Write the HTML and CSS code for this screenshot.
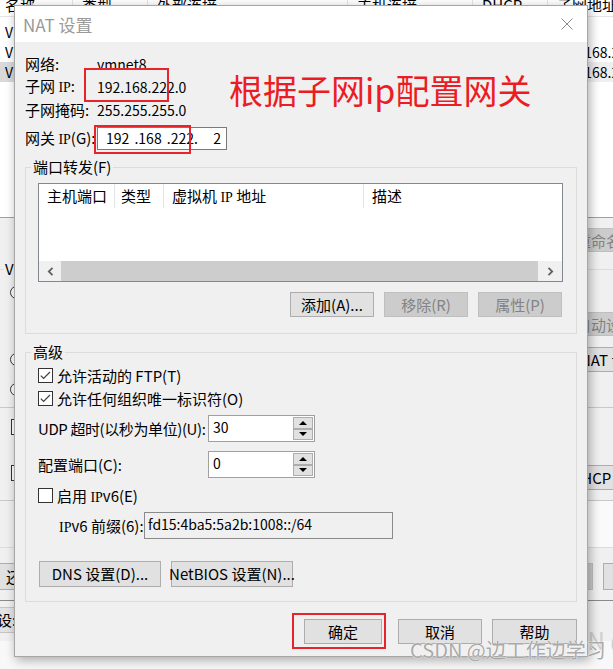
FILE: index.html
```html
<!DOCTYPE html>
<html lang="zh-CN">
<head>
<meta charset="utf-8">
<title>NAT 设置</title>
<link rel="stylesheet" href="styles.css">
</head>
<body>
<div class="desktop">
  <div class="app">
    <div class="thead">
      <div class="th c1">名称</div>
      <div class="th">类型</div>
      <div class="th">外部连接</div>
      <div class="th">主机连接</div>
      <div class="th">DHCP</div>
      <div class="th last">子网地址</div>
    </div>
    <div class="tbody">
      <div class="trow"><div class="td c1">VMnet0</div><div class="td">桥接模式</div><div class="td">自动桥接</div><div class="td">-</div><div class="td">-</div><div class="td"></div></div>
      <div class="trow"><div class="td c1">VMnet1</div><div class="td">仅主机模式</div><div class="td">-</div><div class="td">已连接</div><div class="td">已启用</div><div class="td">192.168.254.0</div></div>
      <div class="trow sel"><div class="td c1">VMnet8</div><div class="td">NAT 模式</div><div class="td">NAT 模式</div><div class="td">已连接</div><div class="td">已启用</div><div class="td">192.168.222.0</div></div>
    </div>
    <div class="panel">
      <div class="p-top"><div class="bbtn dis wide top">重命名网络(W)...</div></div>
      <fieldset class="vmgroup">
        <legend>VMnet 信息</legend>
        <div class="vrow va"><span class="radio"></span></div>
        <div class="vrow vb"><div class="bbtn dis wide r">自动设置(U)...</div></div>
        <div class="vrow vc"><span class="radio"></span><div class="bbtn wide r nat">NAT 设置(S)...</div></div>
        <div class="vrow vd"><span class="radio"></span></div>
        <div class="vrow ve"></div>
        <div class="vrow vf"><span class="bcb"></span></div>
        <div class="vrow vg"><span class="bcb"></span><div class="bbtn wide r dhcp">DHCP 设置(P)...</div></div>
        <div class="vrow vh"><div class="wbox r"></div></div>
      </fieldset>
      <div class="p-btns">
        <div class="bbtn restore">还原默认设置(R)</div>
        <div class="rbtns">
          <div class="bbtn dis small">确定</div>
          <div class="bbtn small">取消</div>
        </div>
      </div>
      <div class="p-foot"><div class="setbar">设:</div></div>
      <div class="p-end"></div>
    </div>
    <div class="wm-back">CSDN @边工作边学习</div>
  </div>

  <div class="dialog">
    <div class="titlebar">
      <span class="title">NAT 设置</span>
      <svg class="close" width="12" height="12" viewBox="0 0 12 12"><path d="M0.5 0.5L11.5 11.5M11.5 0.5L0.5 11.5"/></svg>
    </div>
    <div class="dbody">
      <div class="info">
        <div class="irow r1"><span class="lbl">网络:</span><span class="num">vmnet8</span></div>
        <div class="irow r2"><span class="lbl">子网 <span class="ip">IP</span>:</span><span class="num">192.168.222.0</span></div>
        <div class="irow r3"><span class="lbl">子网掩码:</span><span class="num">255.255.255.0</span></div>
        <div class="irow r4"><span class="lbl">网关 <span class="ip">IP</span>(G):</span><span class="ipbox">192 .168 .222.   2</span></div>
      </div>

      <fieldset class="group pf">
        <legend>端口转发(F)</legend>
        <div class="listview">
          <div class="lv-head">
            <span class="col k1">主机端口</span>
            <span class="col k2">类型</span>
            <span class="col k3">虚拟机 <span class="ip">IP</span> 地址</span>
            <span class="col k4">描述</span>
          </div>
          <div class="lv-body"></div>
          <div class="hs">
            <span class="hs-btn l"><svg width="7" height="9" viewBox="0 0 7 9"><path d="M5.5 0.8L1.8 4.5L5.5 8.2"/></svg></span>
            <span class="hs-thumb"></span>
            <span class="hs-btn rr"><svg width="7" height="9" viewBox="0 0 7 9"><path d="M1.5 0.8L5.2 4.5L1.5 8.2"/></svg></span>
          </div>
        </div>
        <div class="btnrow">
          <div class="btn">添加(A)...</div>
          <div class="btn dis">移除(R)</div>
          <div class="btn dis">属性(P)</div>
        </div>
      </fieldset>

      <fieldset class="group adv">
        <legend>高级</legend>
        <div class="cbrow first">
          <span class="cb"><svg width="13" height="13" viewBox="0 0 13 13"><path d="M1.8 6.6L4.6 9.4L11 3"/></svg></span>
          <span>允许活动的 FTP(T)</span>
        </div>
        <div class="cbrow">
          <span class="cb"><svg width="13" height="13" viewBox="0 0 13 13"><path d="M1.8 6.6L4.6 9.4L11 3"/></svg></span>
          <span>允许任何组织唯一标识符(O)</span>
        </div>
        <div class="frow udp">
          <span class="flbl tight">UDP 超时(以秒为单位)(U):</span>
          <div class="spin">
            <span class="spin-val">30</span>
            <span class="spin-btns">
              <span class="sbtn"><svg width="8" height="4" viewBox="0 0 8 4"><polygon points="0,4 4,0 8,4"/></svg></span>
              <span class="sbtn"><svg width="8" height="4" viewBox="0 0 8 4"><polygon points="0,0 8,0 4,4"/></svg></span>
            </span>
          </div>
        </div>
        <div class="frow port">
          <span class="flbl">配置端口(C):</span>
          <div class="spin">
            <span class="spin-val">0</span>
            <span class="spin-btns">
              <span class="sbtn"><svg width="8" height="4" viewBox="0 0 8 4"><polygon points="0,4 4,0 8,4"/></svg></span>
              <span class="sbtn"><svg width="8" height="4" viewBox="0 0 8 4"><polygon points="0,0 8,0 4,4"/></svg></span>
            </span>
          </div>
        </div>
        <div class="cbrow v6">
          <span class="cb"></span>
          <span>启用 <span class="ip">IP</span>v6(E)</span>
        </div>
        <div class="pfxrow">
          <span><span class="ip">IP</span>v6 前缀(6):</span>
          <span class="pfx">fd15:4ba5:5a2b:1008::/64</span>
        </div>
        <div class="dnsrow">
          <div class="btn wide">DNS 设置(D)...</div>
          <div class="btn wide">NetBIOS 设置(N)...</div>
        </div>
      </fieldset>

      <div class="footer">
        <div class="btn ok">确定</div>
        <div class="btn">取消</div>
        <div class="btn help">帮助</div>
      </div>
    </div>
  </div>

  <div class="mark m1"></div>
  <div class="mark m2"></div>
  <div class="mark m3"></div>
  <div class="note">根据子网ip配置网关</div>
  <div class="wm">CSDN @边工作边学习</div>
</div>
</body>
</html>
```

FILE: styles.css
```css
* { box-sizing: border-box; }
html, body {
  margin: 0;
  padding: 0;
  width: 613px;
  height: 669px;
  overflow: hidden;
  background: #fff;
}
body {
  font-family: "Noto Sans CJK SC", "Liberation Sans", sans-serif;
  font-size: 15px;
  color: #000;
}
.desktop {
  position: relative;
  width: 613px;
  height: 669px;
  overflow: hidden;
}

/* ---------- background window ---------- */
.app {
  position: relative;
  width: 613px;
  height: 669px;
  display: flex;
  flex-direction: column;
  background: #fff;
  font-size: 14px;
  overflow: hidden;
}
.thead, .trow {
  display: grid;
  grid-template-columns: 73px 75px 200px 125px 75px 1fr;
}
.thead {
  height: 23px;
  margin-top: -6px;
  line-height: 22px;
  border-bottom: 1px solid #e5e5e5;
  font-size: 15px;
}
.th {
  padding-left: 9px;
  border-right: 1px solid #e5e5e5;
  white-space: nowrap;
  overflow: hidden;
}
.th.c1 { padding-left: 5px; }
.th.last { border-right: none; }
.tbody {
  height: 201px;
  padding-top: 5px;
  border-bottom: 1px solid #a0a0a0;
}
.trow { height: 20px; line-height: 20px; }
.td { padding-left: 9px; white-space: nowrap; overflow: hidden; }
.td.c1 { padding-left: 5px; }
.trow.sel { background: #efefef; }
.trow.sel .c1 { background: #d9d9d9; }

.panel {
  flex: 1;
  display: flex;
  flex-direction: column;
  background: #f0f0f0;
  font-size: 15px;
}
.p-top {
  height: 41px;
  display: flex;
  justify-content: flex-end;
  align-items: flex-start;
  padding-top: 10px;
}
.bbtn {
  height: 25px;
  border: 1px solid #adadad;
  background: #e1e1e1;
  line-height: 23px;
  padding-left: 10px;
  white-space: nowrap;
  overflow: hidden;
  flex: none;
}
.bbtn.dis { background: #cccccc; border-color: #bfbfbf; color: #838383; }
.bbtn.wide { width: 125px; }
.bbtn.top { height: 24px; margin-right: -77px; }
.vmgroup {
  margin: 0 -20px 0 -6px;
  padding: 0 0 0 9px;
  border: 1px solid #dcdcdc;
  min-width: 0;
}
.vmgroup legend { padding: 0 1px; line-height: 20px; }
.vrow { display: flex; align-items: flex-start; }
.vrow .r { margin-left: auto; margin-right: -58px; }
.radio {
  width: 13px;
  height: 13px;
  border-radius: 50%;
  border: 1px solid #333;
  background: #fff;
  margin-left: 6px;
}
.bcb {
  width: 16px;
  height: 16px;
  border: 1px solid #333;
  background: #fff;
  margin-left: 7px;
}
.va { height: 26px; }
.va .radio { margin-top: 7px; }
.vb { height: 35px; }
.vb .bbtn { margin-top: 7px; height: 24px; }
.vc { height: 40px; }
.vc .radio { margin-top: 13px; }
.vc .bbtn { margin-top: 7px; }
.bbtn.nat { padding-left: 14px; }
.vd { height: 20px; }
.vd .radio { margin-top: 3px; }
.ve { height: 8px; border-bottom: 1px solid #c8c8c8; margin-left: -9px; }
.vf { height: 38px; }
.vf .bcb { margin-top: 11px; }
.vg { height: 55px; border-bottom: 1px solid #c8c8c8; margin-left: -9px; padding-left: 9px; }
.vg .bcb { margin-top: 19px; }
.vg .bbtn { margin-top: 19px; }
.bbtn.dhcp { padding-left: 5px; }
.vh { height: 46px; }
.wbox { width: 150px; height: 46px; background: #fafafa; }
.p-btns {
  height: 53px;
  display: flex;
  align-items: flex-start;
  padding-top: 15px;
  border-bottom: 1px solid #8a8a8a;
}
.bbtn.restore { width: 130px; height: 27px; line-height: 25px; margin-left: -1px; padding-left: 6px; }
.rbtns { margin-left: auto; margin-right: -74px; display: flex; gap: 10px; }
.bbtn.small { width: 84px; height: 27px; line-height: 25px; text-align: center; padding-left: 0; }
.p-foot { height: 40px; }
.setbar {
  margin-top: 6px;
  width: 18px;
  height: 26px;
  background: #e3e3e3;
  border-top: 1px solid #c4c4c4;
  border-bottom: 1px solid #c4c4c4;
  line-height: 24px;
  text-indent: -3px;
  overflow: hidden;
  white-space: nowrap;
}
.p-end { flex: 1; background: #f8f8f8; }
.wm-back {
  position: absolute;
  left: 542px;
  top: 628px;
  font-size: 24px;
  line-height: 24px;
  color: #cfcfcf;
  white-space: nowrap;
}

/* ---------- dialog ---------- */
.dialog {
  position: absolute;
  left: 14px;
  top: 5px;
  width: 574px;
  height: 652px;
  border: 1px solid #a6a6a6;
  background: #f0f0f0;
  box-shadow: 2px 3px 10px rgba(0, 0, 0, 0.32);
  display: flex;
  flex-direction: column;
}
.titlebar {
  height: 36px;
  background: #fff;
  display: flex;
  align-items: center;
  justify-content: space-between;
  padding: 0 14px 0 8px;
}
.title { font-size: 17px; color: #9a9a9a; line-height: 20px; margin-top: 2px; }
.close path { stroke: #8a8a8a; stroke-width: 1; fill: none; }
.dbody { flex: 1; padding: 11px 10px 12px; }

.irow { display: grid; grid-template-columns: 72px auto; align-items: center; }
.r1 { height: 21px; }
.r2 { height: 20px; margin-top: 2px; }
.r3 { height: 20px; margin-top: 4px; }
.r4 { height: 23px; margin-top: 7px; }
.lbl { white-space: nowrap; line-height: 20px; }
.num { font-size: 14px; line-height: 20px; }
.ip { font-family: "Liberation Serif", serif; font-size: 14px; }
.ipbox {
  width: 130px;
  height: 23px;
  border: 1px solid #7a7a7a;
  background: #fff;
  font-size: 14px;
  line-height: 21px;
  padding-left: 8px;
  white-space: pre;
  word-spacing: 2px;
}

fieldset.group {
  border: 1px solid #dcdcdc;
  min-width: 0;
  margin-left: 0;
  margin-right: 0;
  margin-bottom: 0;
}
fieldset.group legend {
  padding: 0 2px;
  margin-left: -7px;
  line-height: 20px;
}
fieldset.group.pf { margin-top: 7px; padding: 6px 13px 16px 12px; }
.listview {
  height: 99px;
  border: 1px solid #828790;
  background: #fff;
  display: flex;
  flex-direction: column;
}
.lv-head { height: 24px; display: flex; }
.col {
  line-height: 24px;
  padding-left: 8px;
  border-right: 1px solid #e5e5e5;
  white-space: nowrap;
}
.k1 { width: 76px; }
.k2 { width: 49px; padding-left: 6px; }
.k3 { width: 200px; }
.k4 { border-right: none; }
.lv-body { flex: 1; }
.hs { height: 20px; display: flex; background: #f0f0f0; }
.hs-btn { width: 22px; display: flex; align-items: center; justify-content: center; }
.hs-btn.rr { width: 24px; }
.hs-btn path { stroke: #606060; stroke-width: 1.8; fill: none; }
.hs-thumb { flex: 1; background: #cdcdcd; }
.btnrow { margin-top: 10px; display: flex; justify-content: flex-end; gap: 10px; padding-right: 1px; }

.btn {
  width: 84px;
  height: 25px;
  border: 1px solid #adadad;
  background: #e1e1e1;
  display: flex;
  align-items: center;
  justify-content: center;
  white-space: nowrap;
  line-height: 20px;
}
.btn.dis { background: #cccccc; border-color: #bfbfbf; color: #838383; }
.btn.wide { width: 122px; height: 26px; }

fieldset.group.adv { margin-top: 8px; padding: 0 13px 14px 12px; }
.cbrow { display: flex; align-items: center; gap: 4px; height: 20px; margin-top: 3px; }
.cbrow.v6 { margin-top: 7px; }
.cb {
  width: 15px;
  height: 15px;
  border: 1px solid #333;
  background: #fff;
  display: flex;
  align-items: center;
  justify-content: center;
  flex: none;
}
.cb path { stroke: #444; stroke-width: 1.3; fill: none; }
.frow { display: grid; grid-template-columns: 170px auto; align-items: center; height: 27px; white-space: nowrap; }
.flbl.tight { letter-spacing: -0.4px; }
.udp { margin-top: 7px; }
.port { margin-top: 9px; }
.spin {
  width: 107px;
  height: 27px;
  border: 1px solid #a0a0a0;
  background: #fff;
  display: flex;
}
.spin-val { flex: 1; font-size: 14px; line-height: 16px; padding: 3px 0 0 4px; }
.spin-btns { width: 21px; display: flex; flex-direction: column; padding: 1px 1px 1px 0; }
.sbtn {
  flex: 1;
  background: #e1e1e1;
  border: 1px solid #adadad;
  display: flex;
  align-items: center;
  justify-content: center;
}
.sbtn polygon { fill: #000; }
.pfxrow {
  margin-top: 7px;
  height: 27px;
  display: grid;
  grid-template-columns: 85px 249px;
  align-items: center;
  padding-left: 21px;
  white-space: nowrap;
}
.pfx {
  height: 27px;
  border: 1px solid #8a8a8a;
  background: #f0f0f0;
  font-size: 14px;
  line-height: 16px;
  padding: 3px 0 0 3px;
}
.dnsrow { margin-top: 22px; display: flex; gap: 10px; padding-left: 1px; }

.footer { margin-top: 17px; display: flex; justify-content: flex-end; }
.footer .ok { width: 78px; margin-right: 16px; }
.footer .help { width: 85px; margin-left: 10px; }

/* ---------- annotations ---------- */
.mark {
  position: absolute;
  border: 2px solid #e8242b;
}
.m1 { left: 84px; top: 68px; width: 85px; height: 34px; }
.m2 { left: 94px; top: 125px; width: 97px; height: 29px; }
.m3 { left: 292px; top: 613px; width: 94px; height: 36px; }
.note {
  position: absolute;
  left: 229px;
  top: 73px;
  font-size: 34px;
  line-height: 34px;
  color: #ec1c24;
  white-space: nowrap;
}
.wm {
  position: absolute;
  left: 410px;
  top: 640px;
  font-size: 20px;
  line-height: 20px;
  color: #a9a9a9;
  white-space: nowrap;
  text-shadow: 0 0 1px #fff, 0 0 1px #fff;
}
```
